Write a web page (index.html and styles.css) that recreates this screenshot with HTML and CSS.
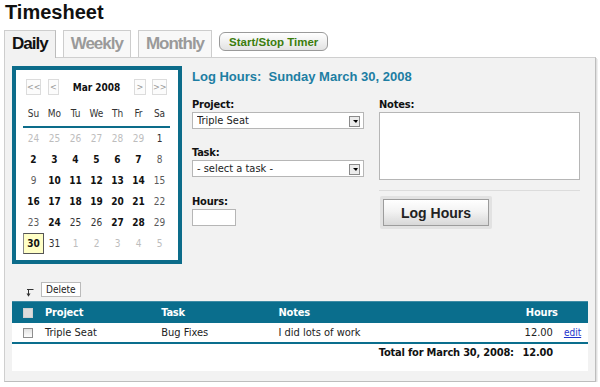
FILE: index.html
```html
<!DOCTYPE html>
<html lang="en">
<head>
<meta charset="utf-8">
<title>Timesheet</title>
<link rel="stylesheet" href="styles.css">
</head>
<body>
<h1 class="title">Timesheet</h1>
<div class="tabs">
  <a class="tab active" href="#">Daily</a>
  <a class="tab" href="#">Weekly</a>
  <a class="tab" href="#">Monthly</a>
  <button class="timer" type="button">Start/Stop Timer</button>
</div>
<div class="panel">
  <div class="top">
    <div class="cal">
      <div class="cal-nav">
        <button class="nav-btn dbl" type="button">&lt;&lt;</button>
        <button class="nav-btn sgl" type="button">&lt;</button>
        <div class="cal-month">Mar 2008</div>
        <button class="nav-btn sgl r" type="button">&gt;</button>
        <button class="nav-btn dbl r2" type="button">&gt;&gt;</button>
      </div>
      <div class="cal-head">
        <span>Su</span><span>Mo</span><span>Tu</span><span>We</span><span>Th</span><span>Fr</span><span>Sa</span>
      </div>
      <div class="cal-days">
        <span class="o">24</span><span class="o">25</span><span class="o">26</span><span class="o">27</span><span class="o">28</span><span class="o">29</span><span class="n">1</span>
        <span class="b">2</span><span class="b">3</span><span class="b">4</span><span class="b">5</span><span class="b">6</span><span class="b">7</span><span class="w">8</span>
        <span class="w">9</span><span class="b">10</span><span class="b">11</span><span class="b">12</span><span class="b">13</span><span class="b">14</span><span class="w">15</span>
        <span class="b">16</span><span class="b">17</span><span class="b">18</span><span class="b">19</span><span class="b">20</span><span class="b">21</span><span class="w">22</span>
        <span class="w">23</span><span class="b">24</span><span class="n">25</span><span class="n">26</span><span class="b">27</span><span class="b">28</span><span class="w">29</span>
        <span class="b today">30</span><span class="n">31</span><span class="o">1</span><span class="o">2</span><span class="o">3</span><span class="o">4</span><span class="o">5</span>
      </div>
    </div>
    <div class="form">
      <h2 class="form-title">Log Hours:&nbsp; Sunday March 30, 2008</h2>
      <div class="fields">
        <div class="col-left">
          <label class="lbl" for="project">Project:</label>
          <span class="select-wrap">
            <select id="project" class="select"><option>Triple Seat</option></select>
          </span>
          <label class="lbl task-lbl" for="task">Task:</label>
          <span class="select-wrap">
            <select id="task" class="select"><option>- select a task -</option></select>
          </span>
          <label class="lbl hours-lbl" for="hours">Hours:</label>
          <input id="hours" class="hours-input" type="text">
        </div>
        <div class="col-right">
          <label class="lbl" for="notes">Notes:</label>
          <textarea id="notes" class="notes"></textarea>
          <div class="sep"></div>
          <div class="log-frame">
            <button class="log-btn" type="button">Log Hours</button>
          </div>
        </div>
      </div>
    </div>
  </div>
  <div class="actions">
    <svg class="arrow" width="8" height="9" viewBox="0 0 8 9" aria-hidden="true">
      <path d="M1 1.5 H7.5 M2.5 1.5 V6" stroke="#333" stroke-width="1" fill="none"/>
      <polygon points="0.5,5.5 4.5,5.5 2.5,8.8" fill="#333"/>
    </svg>
    <button class="del-btn" type="button">Delete</button>
  </div>
  <div class="entries-wrap">
    <table class="entries">
      <colgroup>
        <col class="c-chk"><col class="c-proj"><col class="c-task"><col class="c-notes"><col class="c-hours"><col class="c-edit">
      </colgroup>
      <thead>
        <tr>
          <th class="chk"><input type="checkbox" class="cb cb-head"></th>
          <th>Project</th>
          <th>Task</th>
          <th>Notes</th>
          <th class="h-hours">Hours</th>
          <th></th>
        </tr>
      </thead>
      <tbody>
        <tr class="entry">
          <td class="chk"><input type="checkbox" class="cb"></td>
          <td>Triple Seat</td>
          <td>Bug Fixes</td>
          <td>I did lots of work</td>
          <td class="num">12.00</td>
          <td class="edit"><a href="#">edit</a></td>
        </tr>
        <tr class="total">
          <td colspan="4" class="total-lbl">Total for March 30, 2008:</td>
          <td class="num">12.00</td>
          <td></td>
        </tr>
      </tbody>
    </table>
  </div>
</div>
</body>
</html>
```

FILE: styles.css
```css
* { box-sizing: border-box; }

body {
  margin: 0;
  background: #fff;
  font-family: "DejaVu Sans Condensed", "DejaVu Sans", sans-serif;
  font-size: 11px;
  color: #222;
}

.title {
  margin: 0;
  padding-left: 5px;
  font: bold 20px/24px "Liberation Sans", Arial, sans-serif;
  color: #111;
}

.tabs {
  display: flex;
  align-items: flex-start;
  gap: 7px;
  height: 27px;
  margin-top: 6px;
  padding-left: 4px;
}

.tab {
  height: 27px;
  padding: 3px 7px 0 7px;
  border: 1px solid #cdcdcd;
  border-bottom: none;
  background: #f8f8f8;
  font: bold 17px/20px "Liberation Sans", Arial, sans-serif;
  letter-spacing: -1px;
  color: #9a9a9a;
  text-decoration: none;
}

.tab.active {
  position: relative;
  z-index: 1;
  height: 28px;
  background: #f2f2f2;
  border-right-color: #bcbcbc;
  color: #111;
}

.timer {
  height: 19px;
  margin-top: 2px;
  padding: 0 9px;
  border: 1px solid #9a9a9a;
  border-radius: 6px;
  background: linear-gradient(#ffffff, #e2e2e2);
  font: bold 11.5px "Liberation Sans", Arial, sans-serif;
  color: #3c7d0c;
}

.panel {
  margin: 0 4px;
  padding: 8px 7px 10px 7px;
  border: 1px solid #cfcfcf;
  border-right-color: #bdbdbd;
  border-bottom-color: #bdbdbd;
  box-shadow: 1px 1px 0 #e0e0e0, 2px 2px 0 #f0f0f0;
  background: #f2f2f2;
}

.top {
  display: flex;
  align-items: flex-start;
}

/* Calendar */
.cal {
  width: 170px;
  height: 198px;
  flex: none;
  padding: 9px 8px 0 7px;
  border: 4px solid #0c6c8a;
  background: #fff;
  font-size: 10px;
}

.cal-nav {
  display: flex;
  align-items: center;
  height: 16px;
  padding: 0 3px;
}

.nav-btn {
  height: 16px;
  padding: 0;
  border: 1px solid #dcdcdc;
  background: #fcfcfc;
  color: #999;
  font: 9px/14px "DejaVu Sans Condensed", "DejaVu Sans", sans-serif;
  text-align: center;
}

.nav-btn.dbl { width: 15px; }
.nav-btn.sgl { width: 11px; margin-left: 7px; }
.nav-btn.sgl.r { width: 12px; margin-left: 0; }
.nav-btn.r2 { margin-left: 6px; }

.cal-month {
  flex: 1;
  text-align: center;
  font-weight: bold;
  color: #111;
}

.cal-head {
  display: grid;
  grid-template-columns: repeat(7, 21px);
  margin-top: 8px;
  padding-bottom: 2px;
  border-bottom: 2px solid #0c6c8a;
  color: #333;
}

.cal-head span,
.cal-days span {
  height: 21px;
  line-height: 21px;
  text-align: center;
}

.cal-days {
  display: grid;
  grid-template-columns: repeat(7, 21px);
  grid-auto-rows: 21px;
}

.cal-days .o { color: #bdbdbd; }
.cal-days .n { color: #333; }
.cal-days .w { color: #5a5a5a; }
.cal-days .b { color: #111; font-weight: bold; }
.cal-days .today {
  border: 1px solid #555;
  border-left-color: #888;
  background: #ffffc6;
  line-height: 19px;
}

/* Form */
.form {
  margin-left: 10px;
  padding-top: 3px;
}

.form-title {
  margin: 0;
  font: bold 13px/16px "Liberation Sans", Arial, sans-serif;
  color: #1d7ea3;
}

.fields {
  display: flex;
  gap: 15px;
  margin-top: 13px;
}

.col-left { width: 172px; }
.col-right { width: 201px; }

.lbl {
  display: block;
  line-height: 13px;
  font-weight: bold;
  letter-spacing: -0.2px;
  color: #111;
}

.task-lbl { margin-top: 17px; }
.hours-lbl { margin-top: 18px; }

.select-wrap {
  position: relative;
  display: block;
  margin-top: 1px;
}

.select {
  display: block;
  width: 172px;
  height: 17px;
  margin: 0;
  padding: 0 0 0 4px;
  border: 1px solid #b6b6b6;
  border-radius: 0;
  background: #fff;
  -webkit-appearance: none;
  appearance: none;
  font: 11px/15px "DejaVu Sans Condensed", "DejaVu Sans", sans-serif;
  color: #222;
}

.select-wrap::after {
  content: "";
  position: absolute;
  right: 4px;
  top: 4px;
  width: 9px;
  height: 9px;
  border: 1px solid #8a8a8a;
  background: #ececec;
}

.select-wrap::before {
  content: "";
  position: absolute;
  z-index: 1;
  right: 6px;
  top: 8px;
  border-left: 3px solid transparent;
  border-right: 2px solid transparent;
  border-top: 3px solid #000;
}

.hours-input {
  display: block;
  width: 44px;
  height: 17px;
  margin: 1px 0 0 0;
  padding: 0 3px;
  border: 1px solid #b6b6b6;
  background: #fff;
  font: 11px "DejaVu Sans Condensed", "DejaVu Sans", sans-serif;
}

.notes {
  display: block;
  width: 201px;
  height: 68px;
  margin: 1px 0 0 0;
  padding: 2px;
  border: 1px solid #b6b6b6;
  background: #fff;
  resize: none;
  font: 11px "DejaVu Sans Condensed", "DejaVu Sans", sans-serif;
}

.sep {
  height: 1px;
  margin-top: 10px;
  background: #dcdcdc;
}

.log-frame {
  width: 112px;
  height: 33px;
  margin: 5px 0 0 1px;
  padding: 3px;
  border-radius: 2px;
  background: #e2e2e2;
}

.log-btn {
  display: block;
  width: 106px;
  height: 27px;
  margin: 0;
  padding: 0;
  border: 1px solid #9c9c9c;
  background: linear-gradient(#ffffff, #f3f3f3 45%, #d8d8d8);
  font: bold 14px "Liberation Sans", Arial, sans-serif;
  color: #222;
}

/* Actions */
.actions {
  display: flex;
  align-items: center;
  gap: 7px;
  height: 15px;
  margin-top: 18px;
  padding-left: 14px;
}

.arrow { display: block; margin-top: 6px; }

.del-btn {
  height: 15px;
  padding: 0 4px;
  border: 1px solid #bbb;
  background: #fff;
  font: 10px/13px "DejaVu Sans Condensed", "DejaVu Sans", sans-serif;
  color: #222;
}

/* Entries table */
.entries-wrap {
  margin-top: 4px;
  padding-bottom: 9px;
  background: #fff;
}

.entries {
  width: 100%;
  border-collapse: collapse;
  table-layout: fixed;
}

.c-chk { width: 32px; }
.c-proj { width: 117px; }
.c-task { width: 117px; }
.c-notes { width: 242px; }
.c-hours { width: 36px; }
.c-edit { width: 31px; }

.entries th,
.entries td {
  padding: 0;
  text-align: left;
  vertical-align: middle;
  white-space: nowrap;
  line-height: 13px;
}

.entries th {
  height: 21px;
  padding-top: 1px;
  border-top: 1px solid #3f8ba5;
  background: #0a6e8d;
  color: #fff;
  font-weight: bold;
  letter-spacing: -0.2px;
}

.entries th:nth-child(2),
.entries td:nth-child(2) { padding-left: 1px; }

.entries th.h-hours { padding-left: 5px; overflow: visible; }

.entries .chk { padding-left: 11px; }

.cb {
  display: block;
  width: 10px;
  height: 10px;
  margin: 0;
  border: 1px solid #8e8e8e;
  background: linear-gradient(#e2e2e2, #fdfdfd);
  -webkit-appearance: none;
  appearance: none;
}

.cb-head {
  border-color: #d0d0d0;
  background: #dcdcdc;
}

.entry td {
  height: 20px;
  padding-top: 1px;
  border-bottom: 2px solid #0a6e8d;
  color: #222;
}

.entries td.num {
  padding-right: 4px;
  text-align: right;
}

.entries td.edit {
  padding-left: 7px;
  font-size: 10px;
}

.edit a { color: #2233cc; }

.total td {
  height: 19px;
  font-weight: bold;
  letter-spacing: -0.2px;
  color: #111;
}

.entries td.total-lbl {
  padding-right: 7px;
  text-align: right;
}
```
